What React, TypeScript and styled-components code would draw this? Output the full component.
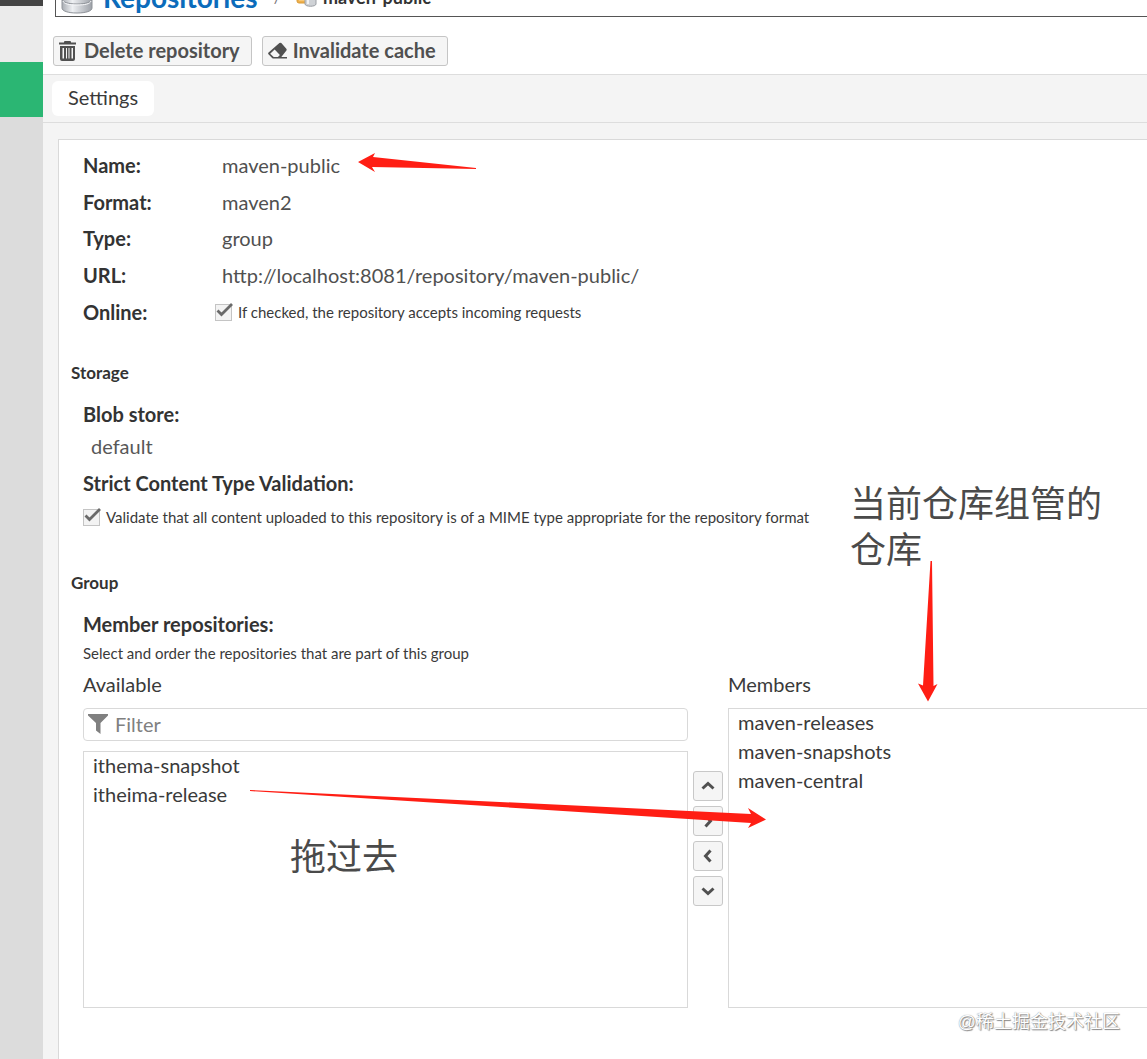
import React from 'react';
import styled, { createGlobalStyle } from 'styled-components';

const Global = createGlobalStyle`
  * { box-sizing: border-box; }
  html, body { margin: 0; padding: 0; }
  body {
    background: #fff;
    color: #3a3a3a;
    font-family: Lato, "Liberation Sans", "Noto Sans CJK SC", sans-serif;
    font-size: 20px;
    line-height: 24px;
    overflow-x: hidden;
  }
  button, input, select { font: inherit; color: inherit; }
`;

const Page = styled.div`
  position: relative;
  display: flex;
  min-height: 100vh;
  overflow: hidden;
`;

const Sidebar = styled.nav`
  flex: 0 0 43px;
  display: flex;
  flex-direction: column;
  background: #dcdcdc;
`;

const SidebarBlock = styled.div<{ $height: number; $color: string }>`
  height: ${p => p.$height}px;
  background: ${p => p.$color};
`;

const Main = styled.main`
  flex: 1;
  min-width: 0;
  display: flex;
  flex-direction: column;
`;

const Header = styled.header`
  display: flex;
  align-items: flex-end;
  height: 17px;
  margin-left: 12px;
  padding-left: 5px;
  border-left: 1px solid #555;
  border-bottom: 1px solid #555;
  overflow: hidden;
`;

const Crumb = styled.a`
  margin-left: 10px;
  color: #0b6cbb;
  font-size: 28px;
  line-height: 38px;
  font-weight: 700;
  text-decoration: none;
`;

const Slash = styled.span`
  margin: 0 14px 0 16px;
  color: #777;
  font-size: 16px;
  line-height: 38px;
`;

const Current = styled.span`
  margin-left: 6px;
  color: #333;
  font-size: 18px;
  line-height: 38px;
  font-weight: 700;
`;

const Toolbar = styled.div`
  display: flex;
  gap: 10px;
  padding: 19px 10px 8px;
  border-bottom: 1px solid #ddd;
`;

const ToolButton = styled.button`
  display: flex;
  align-items: center;
  gap: 6px;
  height: 30px;
  padding: 0 11px 0 5px;
  border: 1px solid #c5c5c5;
  border-radius: 3px;
  background: #f5f5f5;
  color: #505050;
  font-weight: 700;
  line-height: 26px;
  white-space: nowrap;
`;

const ToolText = styled.span`
  padding-bottom: 2px;
`;

const Tabs = styled.div`
  display: flex;
  padding: 6px 9px;
  background: #f4f4f4;
  border-bottom: 1px solid #ddd;
`;

const Tab = styled.button`
  height: 35px;
  padding: 0 16px 3px;
  border: 0;
  border-radius: 6px;
  background: #fff;
`;

const Body = styled.div`
  flex: 1;
  display: flex;
  padding: 16px 0 0 15px;
  background: #f4f4f4;
`;

const Panel = styled.section`
  flex: 1;
  min-width: 0;
  padding: 7px 0 51px 12px;
  border: 1px solid #d9d9d9;
  border-width: 1px 0 0 1px;
  background: #fff;
`;

const Inset = styled.div`
  padding-left: 12px;
`;

const Details = styled.dl`
  display: grid;
  grid-template-columns: 139px 1fr;
  grid-template-rows: repeat(5, 1fr);
  align-items: center;
  height: 183px;
  margin: 0;
`;

const Term = styled.dt`
  color: #333;
  font-weight: 700;
`;

const Value = styled.dd<{ $pull?: boolean }>`
  margin: 0 0 0 ${p => (p.$pull ? '-7px' : '0')};
  color: #505050;
`;

const SectionTitle = styled.h2<{ $top: number }>`
  margin: ${p => p.$top}px 0 17px;
  color: #333;
  font-size: 17px;
  line-height: 24px;
  font-weight: 700;
`;

const FieldTitle = styled.h3`
  margin: 0;
  color: #333;
  font-size: 20px;
  line-height: 24px;
  font-weight: 700;
`;

const BlobValue = styled.div`
  margin: 8px 0 13px 8px;
  color: #585858;
`;

const CheckLabel = styled.label`
  display: flex;
  align-items: center;
  gap: 5px;
  color: #3a3a3a;
  font-size: 15px;
  line-height: 24px;
`;

const CheckWrap = styled.span`
  position: relative;
  display: flex;
  width: 18px;
  height: 18px;

  svg {
    position: absolute;
    left: 0;
    top: -1px;
    pointer-events: none;
  }
`;

const CheckInput = styled.input`
  appearance: none;
  width: 17px;
  height: 17px;
  margin: 1px 0 0;
  border: 1px solid #c4c4c4;
  background: #f3f3f3;
`;

const StrictRow = styled.div`
  margin-top: 10px;
`;

const Hint = styled.p`
  margin: 5px 0 7px;
  font-size: 15px;
  line-height: 24px;
`;

const Picker = styled.div`
  display: grid;
  grid-template-columns: minmax(0, 605fr) 40px minmax(0, 419fr);
`;

const Column = styled.div`
  display: flex;
  flex-direction: column;
`;

const ColumnLabel = styled.label`
  margin-bottom: 12px;
`;

const FilterBox = styled.div`
  display: flex;
  align-items: center;
  gap: 7px;
  height: 33px;
  margin-bottom: 10px;
  padding: 0 4px 2px;
  border: 1px solid #d9d9d9;
  border-radius: 4px;
`;

const FilterInput = styled.input`
  flex: 1;
  min-width: 0;
  padding: 0;
  border: 0;
  outline: 0;
  background: transparent;

  &::placeholder { color: #808080; opacity: 1; }
`;

const ListBox = styled.select<{ $height: number; $open?: boolean }>`
  appearance: none;
  width: 100%;
  height: ${p => p.$height}px;
  padding: 0;
  border: 1px solid #d9d9d9;
  border-right-width: ${p => (p.$open ? 0 : 1)}px;
  border-radius: 0;
  background: #fff;
  overflow: hidden;

  option {
    min-height: 29px;
    padding: 1px 9px 4px;
    line-height: 24px;
    color: #3a3a3a;
  }
`;

const Movers = styled.div`
  display: flex;
  flex-direction: column;
  gap: 5px;
  padding: 99px 5px 0;
`;

const MoveButton = styled.button`
  display: flex;
  align-items: center;
  justify-content: center;
  width: 30px;
  height: 30px;
  padding: 0;
  border: 1px solid #c8c8c8;
  border-radius: 3px;
  background: #f5f5f5;
`;

const Note = styled.div<{ $x: number; $y: number; $w: number }>`
  position: absolute;
  left: ${p => p.$x}px;
  top: ${p => p.$y}px;
  width: ${p => p.$w}px;
  color: #4a4a4a;
  font-family: "Noto Sans CJK SC", sans-serif;
  font-size: 36px;
  line-height: 46px;
  font-weight: 400;
  pointer-events: none;
`;

const Arrow = styled.svg<{ $x: number; $y: number }>`
  position: absolute;
  left: ${p => p.$x}px;
  top: ${p => p.$y}px;
  fill: #ff1e14;
  pointer-events: none;
`;

const Watermark = styled.div`
  position: absolute;
  right: 27px;
  bottom: 23px;
  color: #fff;
  font-family: "Liberation Sans", "Noto Sans CJK SC", sans-serif;
  font-size: 18px;
  line-height: 28px;
  text-shadow: 0 0 1px #777, 1px 1px 1px #888;
  pointer-events: none;
`;

const DatabaseIcon = () => (
  <svg width="32" height="32" viewBox="0 0 32 32" style={{ flex: 'none', marginBottom: 2 }}>
    <defs>
      <linearGradient id="drum" x1="0" x2="1">
        <stop offset="0" stopColor="#a9adb3" />
        <stop offset="0.35" stopColor="#eef0f3" />
        <stop offset="1" stopColor="#9da1a8" />
      </linearGradient>
    </defs>
    <path d="M1 5v21c0 3 6 5 15 5s15-2 15-5V5z" fill="url(#drum)" stroke="#8f9399" />
    <path d="M1 17c0 3 6 5 15 5s15-2 15-5" fill="none" stroke="#8f9399" />
    <path d="M2 19c1 3 6 4 14 4s13-1 14-4" fill="none" stroke="#f7f8fa" />
  </svg>
);

const GroupIcon = () => (
  <svg width="22" height="24" viewBox="0 0 22 24" style={{ flex: 'none', marginBottom: 8 }}>
    <path d="M2 2h10v17H4q-2 0-2-2z" fill="#efb04c" stroke="#d99a35" />
    <path d="M4 16h8" stroke="#ffe0a0" />
    <path d="M10 8h11v12c0 3-11 3-11 0z" fill="#cfd2d6" stroke="#9a9ea4" />
    <path d="M13 10v10" stroke="#f2f3f5" strokeWidth="2" />
  </svg>
);

const TrashIcon = () => (
  <svg width="19" height="20" viewBox="0 0 19 20" fill="#505050">
    <path d="M5 1.500V1q0-1 1-1h5q1 0 1 1v.5h5v2H0v-2z" />
    <path fillRule="evenodd" d="M1 5h15v13q0 2-2 2H3q-2 0-2-2zM3.500 7v10.500H5V7zM7 7v10.500h1V7zm2.500 0v10.500h1V7zM12.500 7v10.500H14V7z" />
  </svg>
);

const EraserIcon = () => (
  <svg width="19" height="18" viewBox="0 0 20 18">
    <path fillRule="evenodd" fill="#505050" d="M12 .500q1-.700 2 .200l5.300 6q.800 1-.100 2L14 15.200h6V17H6q-1 0-1.700-.700L.500 12.500q-.800-1 .1-2zM7 7.500l-4.700 4.300L6 15.300h4.500l2-2z" />
  </svg>
);

const FunnelIcon = () => (
  <svg width="20" height="20" viewBox="0 0 20 20">
    <path d="M0 0h20v1.500L12.500 9v11L8 16.500V9L0 1.500z" fill="#808080" />
  </svg>
);

const chevrons = {
  up: 'M1.500 9.500 7 4.500 12.500 9.500',
  right: 'M4.500 1.500 9.500 7 4.500 12.500',
  left: 'M9.500 1.500 4.500 7 9.500 12.500',
  down: 'M1.500 4.500 7 9.500 12.500 4.500',
};

const Chevron = ({ dir }: { dir: keyof typeof chevrons }) => (
  <svg width="14" height="14" viewBox="0 0 14 14">
    <path d={chevrons[dir]} fill="none" stroke="#505050" strokeWidth="3" />
  </svg>
);

const Check = () => (
  <CheckWrap>
    <CheckInput type="checkbox" defaultChecked />
    <svg width="18" height="16" viewBox="0 0 18 16">
      <path d="M2.500 8.500 6.500 12.500 17 2" fill="none" stroke="#6a6a6a" strokeWidth="2.800" />
    </svg>
  </CheckWrap>
);

const details = [
  ['Name:', 'maven-public'],
  ['Format:', 'maven2'],
  ['Type:', 'group'],
  ['URL:', 'http://localhost:8081/repository/maven-public/'],
];

export default function App() {
  return (
    <>
      <Global />
      <Page>
        <Sidebar aria-label="Sections">
          <SidebarBlock $height={6} $color="#444" />
          <SidebarBlock $height={56} $color="#ebebeb" />
          <SidebarBlock $height={55} $color="#2bb673" />
        </Sidebar>
        <Main>
          <Header>
            <DatabaseIcon />
            <Crumb href="#repositories">Repositories</Crumb>
            <Slash>/</Slash>
            <GroupIcon />
            <Current>maven-public</Current>
          </Header>
          <Toolbar>
            <ToolButton type="button"><TrashIcon /><ToolText>Delete repository</ToolText></ToolButton>
            <ToolButton type="button"><EraserIcon /><ToolText>Invalidate cache</ToolText></ToolButton>
          </Toolbar>
          <Tabs role="tablist">
            <Tab type="button" role="tab" aria-selected="true">Settings</Tab>
          </Tabs>
          <Body>
            <Panel>
              <Inset>
                <Details>
                  {details.map(([term, value]) => (
                    <React.Fragment key={term}>
                      <Term>{term}</Term>
                      <Value>{value}</Value>
                    </React.Fragment>
                  ))}
                  <Term>Online:</Term>
                  <Value $pull>
                    <CheckLabel><Check />If checked, the repository accepts incoming requests</CheckLabel>
                  </Value>
                </Details>
              </Inset>
              <SectionTitle $top={31}>Storage</SectionTitle>
              <Inset>
                <FieldTitle>Blob store:</FieldTitle>
                <BlobValue>default</BlobValue>
                <FieldTitle>Strict Content Type Validation:</FieldTitle>
                <StrictRow>
                  <CheckLabel>
                    <Check />
                    Validate that all content uploaded to this repository is of a MIME type appropriate for the repository format
                  </CheckLabel>
                </StrictRow>
              </Inset>
              <SectionTitle $top={42}>Group</SectionTitle>
              <Inset>
                <FieldTitle>Member repositories:</FieldTitle>
                <Hint>Select and order the repositories that are part of this group</Hint>
                <Picker>
                  <Column>
                    <ColumnLabel htmlFor="available">Available</ColumnLabel>
                    <FilterBox>
                      <FunnelIcon />
                      <FilterInput type="text" placeholder="Filter" aria-label="Filter" />
                    </FilterBox>
                    <ListBox id="available" multiple $height={257}>
                      <option>ithema-snapshot</option>
                      <option>itheima-release</option>
                    </ListBox>
                  </Column>
                  <Movers>
                    <MoveButton type="button" aria-label="Move up"><Chevron dir="up" /></MoveButton>
                    <MoveButton type="button" aria-label="Add"><Chevron dir="right" /></MoveButton>
                    <MoveButton type="button" aria-label="Remove"><Chevron dir="left" /></MoveButton>
                    <MoveButton type="button" aria-label="Move down"><Chevron dir="down" /></MoveButton>
                  </Movers>
                  <Column>
                    <ColumnLabel htmlFor="members">Members</ColumnLabel>
                    <ListBox id="members" multiple $height={300} $open>
                      <option>maven-releases</option>
                      <option>maven-snapshots</option>
                      <option>maven-central</option>
                    </ListBox>
                  </Column>
                </Picker>
              </Inset>
            </Panel>
          </Body>
        </Main>
        <Arrow $x={358} $y={153} width="119" height="20" viewBox="0 0 119 20">
          <path d="M0 9 17 0 15 4 118 15v1L14 14l3 5z" />
        </Arrow>
        <Arrow $x={917} $y={561} width="22" height="142" viewBox="0 0 22 142">
          <path d="M13.500 0h1.500l1.500 125 4-2-9.500 17.500-10-18 5 2z" />
        </Arrow>
        <Arrow $x={250} $y={789} width="518" height="40" viewBox="0 0 518 40">
          <path d="M0 1 501 25 498 19 516 30.500 498 39 501 34 0 2z" />
        </Arrow>
        <Note $x={850} $y={478} $w={256}>当前仓库组管的仓库</Note>
        <Note $x={290} $y={831} $w={120}>拖过去</Note>
        <Watermark>@稀土掘金技术社区</Watermark>
      </Page>
    </>
  );
}
